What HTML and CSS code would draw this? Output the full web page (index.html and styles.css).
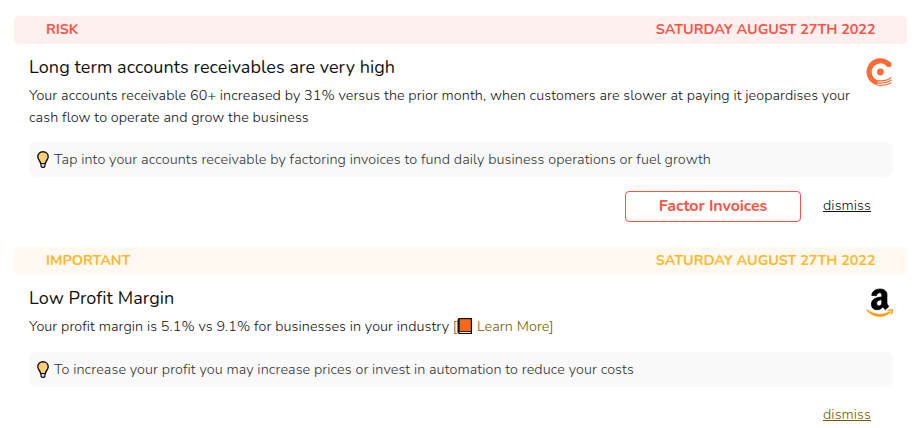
FILE: index.html
```html
<!DOCTYPE html>
<html lang="en">
<head>
<meta charset="utf-8">
<title>Insights</title>
<link rel="stylesheet" href="styles.css">
</head>
<body>
<main class="feed">
  <article class="alert alert-risk">
    <header class="alert-bar"><span>RISK</span><time>SATURDAY AUGUST 27TH 2022</time></header>
    <div class="alert-body">
      <div class="summary">
        <div class="copy">
          <h2>Long term accounts receivables are very high</h2>
          <p>Your accounts receivable 60+ increased by 31% versus the prior month, when customers are slower at paying it jeopardises your<br>cash flow to operate and grow the business</p>
        </div>
        <svg class="logo" viewBox="0 0 28 30" aria-hidden="true">
          <path d="M23.800 7.600A11.200 11.200 0 1 0 12.500 25.800" fill="none" stroke="#ff6b35" stroke-width="5.200"/>
          <circle cx="23.900" cy="7.400" r="2.700" fill="#ff6b35"/>
          <circle cx="15.400" cy="15" r="3.400" fill="#ff6b35"/>
          <path d="M12 23.600Q20.500 25 26.300 20.500M12 25.800Q20 27.200 26.800 23M12 28Q20 29.200 26.300 25.700" fill="none" stroke="#ff6b35" stroke-width="1.200"/>
        </svg>
      </div>
      <div class="tip">
        <svg class="bulb" viewBox="0 0 12 17" aria-hidden="true"><path d="M6 .8C2.900.8.8 3 .8 5.800c0 2.800 2.500 3.800 2.900 6.800h4.600c.4-3 2.900-4 2.900-6.800C11.200 3 9.100.8 6 .8Z" fill="#ffd174" stroke="#111" stroke-width="1.400"/><path d="M4 12.500h4v2.700L7 16.300H5l-1-1.100Z" fill="#ddd" stroke="#111" stroke-width="1.200"/></svg>
        <span>Tap into your accounts receivable by factoring invoices to fund daily business operations or fuel growth</span>
      </div>
      <div class="actions"><button type="button">Factor Invoices</button><a class="dismiss">dismiss</a></div>
    </div>
  </article>
  <article class="alert alert-important">
    <header class="alert-bar"><span>IMPORTANT</span><time>SATURDAY AUGUST 27TH 2022</time></header>
    <div class="alert-body">
      <div class="summary">
        <div class="copy">
          <h2>Low Profit Margin</h2>
          <p>Your profit margin is 5.1% vs 9.1% for businesses in your industry <span class="learn">[<svg class="book" viewBox="0 0 15 16" aria-hidden="true"><path d="M2.500 0H15v16H2.500Q.5 16 .5 14V2Q.5 0 2.500 0Z" fill="#111"/><path d="M2.700 1.200h11.100v12H2.700Z" fill="#ff6814"/><path d="M2.500 14.500h11.300" stroke="#eee"/></svg> <a>Learn More</a>]</span></p>
        </div>
        <svg class="logo-amazon" viewBox="0 0 448 512" aria-hidden="true">
          <path d="M257.200 162.700c-48.700 1.800-169.500 15.500-169.500 117.500 0 109.500 138.300 114 183.500 43.200 6.500 10.200 35.400 37.500 45.300 46.800l56.800-56S341 288.900 341 261.400V114.300C341 89 316.500 32 228.700 32 140.700 32 94 87 94 136.300l73.500 6.800c16.300-49.500 54.200-49.500 54.200-49.500 40.700-.1 35.500 29.800 35.500 69.100zm0 86.800c0 80-84.200 68-84.200 17.200 0-47.200 50.500-56.700 84.200-57.800v40.600z" stroke="#000" stroke-width="12"/>
          <path d="M393.200 413c-7.700 10-70 67-174.500 67S34.200 408.500 9.700 379c-6.800-7.700 1-11.300 5.500-8.300C88.500 415.200 203 488.500 387.700 401c7.500-3.700 13.300 2 5.500 12zm39.800 2.200c-6.500 15.800-16 26.800-21.200 31-5.500 4.500-9.500 2.700-6.500-3.800s19.300-46.500 12.700-55c-6.500-8.300-37-4.300-48-3.200-10.800 1-13 2-14-.3-2.300-5.700 21.700-15.500 37.500-17.500 15.700-1.800 41-.8 46 5.700 3.700 5.100 0 27.100-6.500 43.100z" fill="#f90" stroke="#f90" stroke-width="9"/>
        </svg>
      </div>
      <div class="tip">
        <svg class="bulb" viewBox="0 0 12 17" aria-hidden="true"><path d="M6 .8C2.900.8.8 3 .8 5.800c0 2.800 2.500 3.800 2.900 6.800h4.600c.4-3 2.900-4 2.900-6.800C11.200 3 9.100.8 6 .8Z" fill="#ffd174" stroke="#111" stroke-width="1.400"/><path d="M4 12.500h4v2.700L7 16.300H5l-1-1.100Z" fill="#ddd" stroke="#111" stroke-width="1.200"/></svg>
        <span>To increase your profit you may increase prices or invest in automation to reduce your costs</span>
      </div>
      <div class="actions"><a class="dismiss">dismiss</a></div>
    </div>
  </article>
</main>
</body>
</html>
```
FILE: styles.css
```css
* { box-sizing: border-box; }
body { margin: 0; background: #fff; color: #111; font: 300 14.4px/22px Nunito, Lato, "Open Sans", sans-serif; letter-spacing: .07px; }
.feed { padding: 16px 10px 0 14px; }
.alert-bar { display: flex; justify-content: space-between; height: 28px; padding: 0 31.5px 0 32px; border-radius: 5px; font-weight: 700; line-height: 27px; letter-spacing: -.06px; }
.alert-risk .alert-bar { background: #fff0f0; color: #fc5447; }
.alert-important .alert-bar { background: #fff9f1; color: #ffb82e; }
.alert-body { padding: 11px 14px 0 15px; }
.summary { display: flex; justify-content: space-between; }
h2 { margin: 0 0 4px; font-size: 18px; font-weight: 400; line-height: 25px; }
p { margin: 0; white-space: nowrap; }
.logo { width: 28px; height: 30px; flex: none; margin: 2px 0 0; }
.logo-amazon { width: 27.5px; height: 31.5px; flex: none; margin-top: 1px; }
.tip { display: flex; align-items: center; height: 35px; margin-top: 14px; padding: 0 0 1px 8px; border-radius: 7px; background: #f9f9f9; color: #333; letter-spacing: .078px; }
.bulb { width: 12px; height: 17px; margin-right: 5px; }
.actions { display: flex; justify-content: flex-end; align-items: center; height: 31px; margin-top: 14px; padding-right: 22px; }
button { width: 176px; height: 31px; margin-right: 22px; padding-bottom: 3px; border: 1px solid #fc5447; border-radius: 4px; background: #fff; color: #fc5447; font: inherit; font-size: 16px; font-weight: 680; letter-spacing: -.1px; }
.dismiss { margin-bottom: 3px; text-decoration: underline; }
.alert-important { margin-top: 25px; }
.alert-important .tip { margin-top: 15px; }
.alert-important .actions { margin-top: 13px; }
.book { width: 15px; height: 16px; margin: 0 1px 0 0; vertical-align: -3px; }
.learn, .alert-important .dismiss { color: #7a5800; }
```
